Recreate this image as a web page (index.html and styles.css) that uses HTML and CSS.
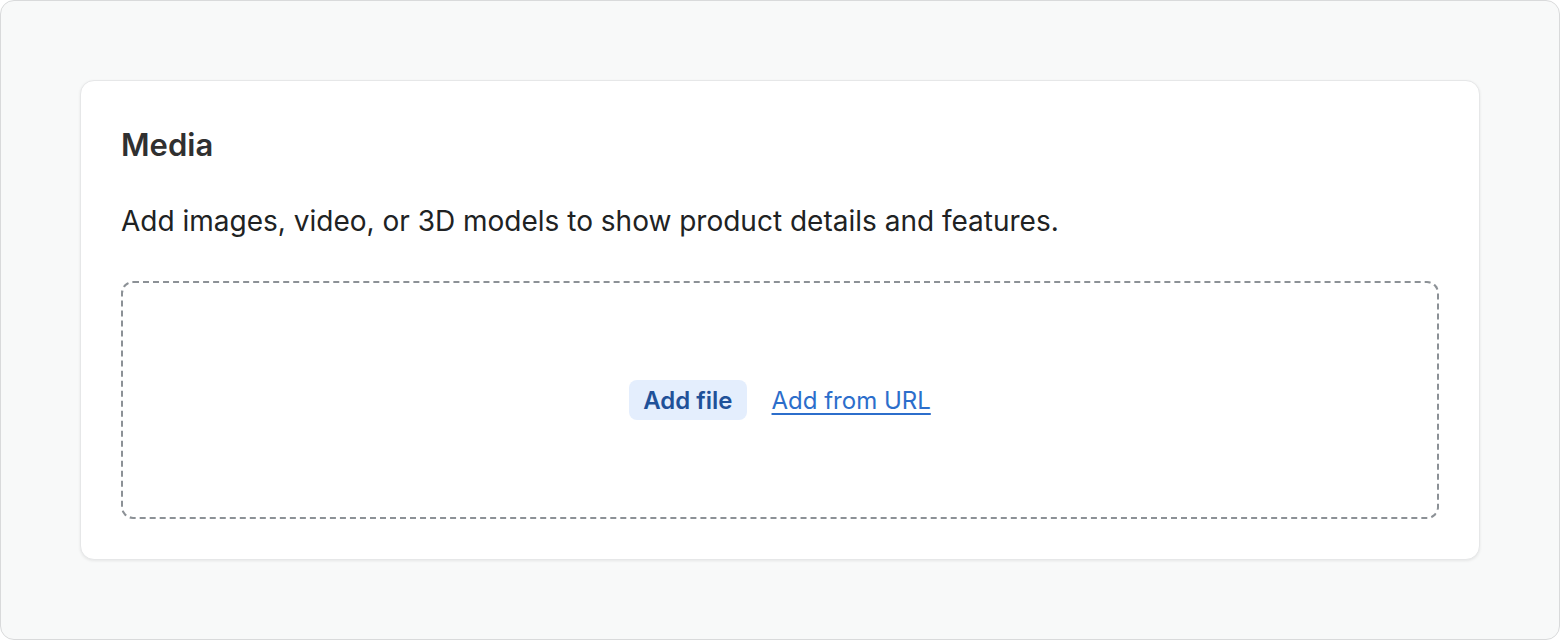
FILE: index.html
```html
<!DOCTYPE html>
<html lang="en">
<head>
<meta charset="utf-8">
<title>Media</title>
<link rel="stylesheet" href="styles.css">
</head>
<body>
<div class="frame">
  <section class="card">
    <h2 class="card-title">Media</h2>
    <p class="card-desc">Add images, video, or 3D models to show product details and features.</p>
    <div class="dropzone">
      <button class="btn-add" type="button">Add file</button>
      <a class="link-url" href="#">Add from URL</a>
    </div>
  </section>
</div>
</body>
</html>
```
FILE: styles.css
```css
* { box-sizing: border-box; }
html, body { margin: 0; padding: 0; }
body {
  font-family: Inter, "Noto Sans", "Liberation Sans", sans-serif;
  color: #202223;
  background: #ffffff;
}
.frame {
  width: 1560px;
  height: 640px;
  border: 1px solid #d9dadb;
  border-radius: 14px;
  background: #f8f9f9;
  padding: 79px;
}
.card {
  width: 1400px;
  height: 480px;
  background: #ffffff;
  border: 1px solid #e6e7e8;
  border-radius: 14px;
  box-shadow: 0 1px 3px rgba(0,0,0,0.08);
  padding: 40px;
  display: flex;
  flex-direction: column;
}
.card-title {
  margin: 0;
  font-size: 31px;
  font-weight: 600;
  line-height: 48px;
  color: #303030;
}
.card-desc {
  margin: 32px 0 0;
  font-size: 28px;
  line-height: 40px;
  color: #202223;
}
.dropzone {
  margin-top: 40px;
  flex: 1;
  border: 2px dashed #8c9196;
  border-radius: 12px;
  display: flex;
  align-items: center;
  justify-content: center;
  gap: 25px;
}
.btn-add {
  font-family: inherit;
  font-size: 24px;
  font-weight: 600;
  color: #1f5199;
  background: #e4eefd;
  border: none;
  border-radius: 8px;
  height: 40px;
  padding: 0 14px;
}
.link-url {
  font-size: 24px;
  color: #2c6ecb;
  text-decoration: underline;
  text-underline-offset: 4px;
}
```
